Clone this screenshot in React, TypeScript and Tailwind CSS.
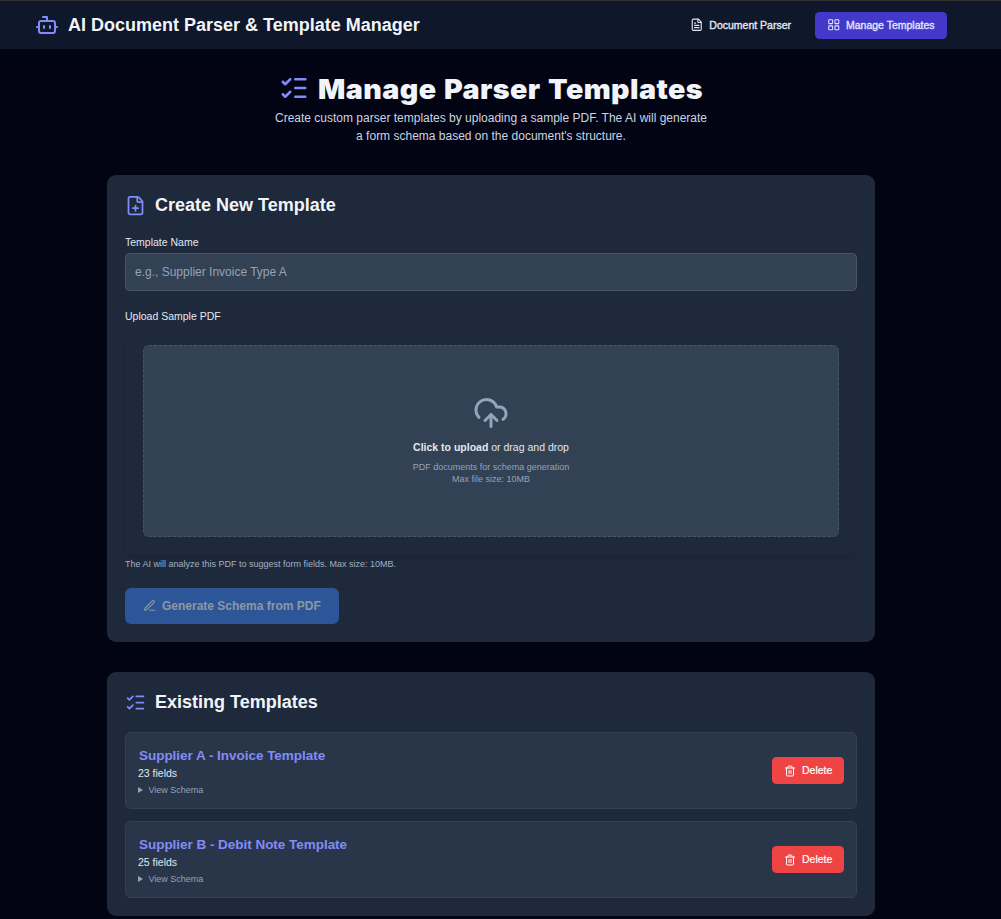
import { Bot, CloudUpload, FilePlus, FileText, LayoutGrid, ListChecks, Trash2 } from "lucide-react";

const templates = [
  { name: "Supplier A - Invoice Template", fields: 23 },
  { name: "Supplier B - Debit Note Template", fields: 25 },
];

function PenIcon({ className }: { className?: string }) {
  return (
    <svg
      className={className}
      viewBox="0 0 24 24"
      fill="none"
      stroke="currentColor"
      strokeWidth={2}
      strokeLinecap="round"
      strokeLinejoin="round"
    >
      <path d="M12 20h9" />
      <path d="M16.5 3.5a2.12 2.12 0 0 1 3 3L7 19l-4 1 1-4Z" />
    </svg>
  );
}

export default function App() {
  return (
    <div className="h-[919px] overflow-hidden bg-[#020414] font-['Liberation_Sans',Arial,sans-serif] text-[#e2e8f0]">
      <header className="h-[49px] border-t border-[#333333] bg-[#0f172a]">
        <div className="flex h-full items-center justify-between pr-[54px] pl-[35px]">
          <div className="flex items-center">
            <Bot className="mr-[9px] size-6 text-[#818cf8]" strokeWidth={2} />
            <span className="text-[18px] leading-6 font-bold whitespace-nowrap text-[#f1f5f9]">
              AI Document Parser &amp; Template Manager
            </span>
          </div>
          <nav className="flex items-center gap-3 text-[10.5px] leading-[15px] font-medium whitespace-nowrap">
            <a className="flex h-[27px] items-center gap-[5.5px] px-3 text-[#e2e8f0]">
              <FileText className="size-[13.5px]" strokeWidth={2} />
              <span className="[-webkit-text-stroke:0.35px]">Document Parser</span>
            </a>
            <a className="flex h-[27px] w-[132px] items-center gap-[5.5px] rounded-[4.5px] bg-[#4338ca] px-3 text-[#e0e7ff]">
              <LayoutGrid className="size-[13.5px]" strokeWidth={1.8} />
              <span className="[-webkit-text-stroke:0.35px]">Manage Templates</span>
            </a>
          </nav>
        </div>
      </header>

      <main className="ml-[107px] w-[768px] pt-[27px]">
        <div className="flex h-[99px] flex-col items-center text-center">
          <h1 className="flex h-[27px] items-center text-[27px] leading-[27px] font-black whitespace-nowrap text-[#f1f5f9]">
            <ListChecks className="mr-[9px] mb-[3px] size-[30px] text-[#818cf8]" />
            <span className="block w-[385px] origin-left scale-x-[1.06] text-left font-['Inter',sans-serif] tracking-[0.4px] [word-spacing:1.2px]">
              Manage Parser Templates
            </span>
          </h1>
          <p className="mt-[6px] text-[12px] leading-[18px] whitespace-nowrap text-[#cbd5e1]">
            Create custom parser templates by uploading a sample PDF. The AI will generate
            <br />a form schema based on the document's structure.
          </p>
        </div>

        <section className="h-[467px] rounded-[9px] bg-[#1e293b] px-[18px] pt-[18px]">
          <h2 className="flex h-6 items-center text-[18px] leading-6 font-bold text-[#f1f5f9]">
            <FilePlus className="mr-[9px] size-[21px] text-[#818cf8]" />
            Create New Template
          </h2>
          <label className="mt-[18px] block h-[18px] text-[10.5px] leading-[15px] text-[#e2e8f0]">Template Name</label>
          <input
            className="block h-[38px] w-full rounded-[4.5px] border border-[#475569] bg-[#334155] px-[9px] text-[12px] text-[#e2e8f0] placeholder:text-[#94a3b8]"
            placeholder="e.g., Supplier Invoice Type A"
          />
          <label className="mt-[18px] block h-[18px] text-[10.5px] leading-[15px] text-[#e2e8f0]">Upload Sample PDF</label>
          <div className="h-[228px] rounded-[9px] p-[18px] shadow-[0_3px_5px_-1px_rgb(0_0_0/0.1)]">
            <div className="flex h-[192px] flex-col items-center rounded-[6px] border border-dashed border-[#475569] bg-[#334155] pt-[49px] text-center">
              <CloudUpload className="size-9 text-[#94a3b8]" />
              <p className="mt-[9px] text-[10.5px] leading-[15px] text-[#e2e8f0]">
                <span className="font-bold">Click to upload</span> or drag and drop
              </p>
              <p className="mt-[6px] text-[9px] leading-3 text-[#94a3b8]">
                PDF documents for schema generation
                <br />
                Max file size: 10MB
              </p>
            </div>
          </div>
          <p className="mt-[3px] text-[9px] leading-3 text-[#a3b0c2]">
            The AI will analyze this PDF to suggest form fields. Max size: 10MB.
          </p>
          <button className="mt-[18px] flex h-9 w-[214px] items-center rounded-[6px] bg-[#2c5698] pl-[18px] text-[12px] font-bold whitespace-nowrap text-[#8e97a5]">
            <PenIcon className="mr-[5.5px] mb-px size-[13.5px]" />
            Generate Schema from PDF
          </button>
        </section>

        <section className="mt-[30px] h-[244px] rounded-[9px] bg-[#1e293b] px-[18px] pt-[18px]">
          <h2 className="mb-[18px] flex h-6 items-center text-[18px] leading-6 font-bold text-[#f1f5f9]">
            <ListChecks className="mr-[9px] size-[21px] text-[#818cf8]" />
            Existing Templates
          </h2>
          <div className="flex flex-col gap-3">
            {templates.map((t) => (
              <article
                key={t.name}
                className="flex h-[77px] items-center justify-between rounded-[6px] border border-[#334155] bg-[#293548] px-3"
              >
                <div>
                  <h3 className="pt-px pl-px text-[13.5px] leading-[21px] font-bold tracking-[-0.03px] text-[#818cf8]">{t.name}</h3>
                  <p className="text-[10.5px] leading-[15px] text-[#e2e8f0]">{t.fields} fields</p>
                  <div className="mt-[2px] flex h-[15px] items-center text-[9px] leading-3 text-[#94a3b8]">
                    <svg className="mr-[5.5px] h-[6px] w-[5px]" viewBox="0 0 5 6" fill="currentColor">
                      <path d="M0 0L5 3L0 6Z" />
                    </svg>
                    View Schema
                  </div>
                </div>
                <button className="flex h-[27px] w-[72px] items-center rounded-[4.5px] bg-[#ef4444] pl-3 text-[10.5px] text-white">
                  <Trash2 className="mr-[6px] size-3" strokeWidth={2} />
                  <span className="[-webkit-text-stroke:0.2px]">Delete</span>
                </button>
              </article>
            ))}
          </div>
        </section>
      </main>
    </div>
  );
}
